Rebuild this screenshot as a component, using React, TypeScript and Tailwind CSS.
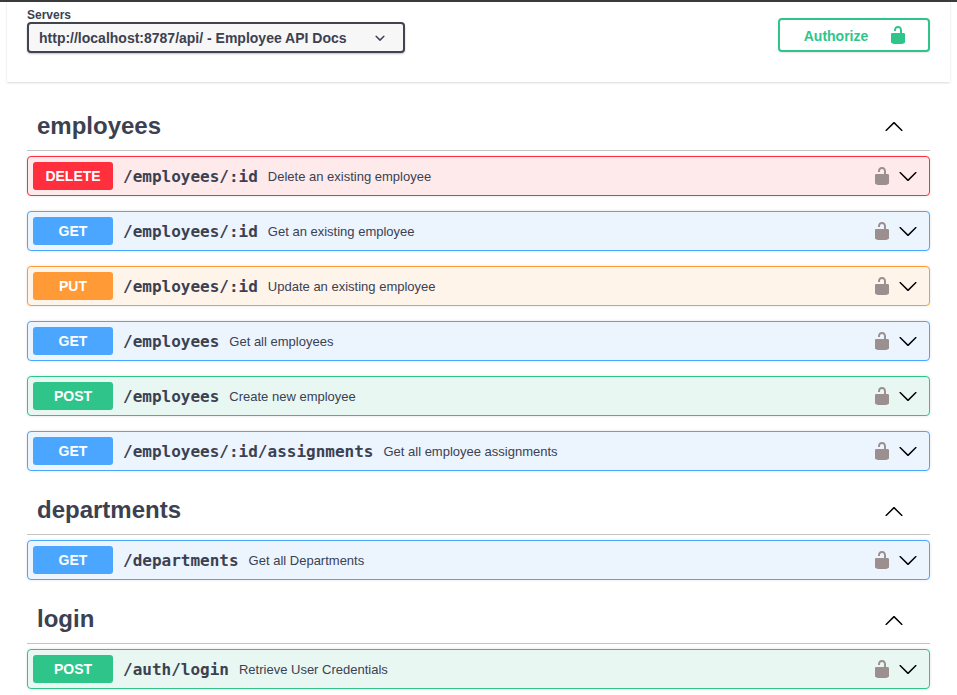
import React from "react";

type Method = "GET" | "POST" | "PUT" | "DELETE";

const methodStyles: Record<Method, { row: string; badge: string }> = {
  GET: { row: "border-[#4ba6ff] bg-[#ecf4fe]", badge: "bg-[#4ba6ff]" },
  POST: { row: "border-[#2fc58a] bg-[#e9f7f2]", badge: "bg-[#2fc58a]" },
  PUT: { row: "border-[#ff9a36] bg-[#fff4ea]", badge: "bg-[#ff9a36]" },
  DELETE: { row: "border-[#ff2f3e] bg-[#feeaea]", badge: "bg-[#ff2f3e]" },
};

const sections: {
  name: string;
  headerClass: string;
  titleClass: string;
  ops: { method: Method; path: string; summary: string }[];
}[] = [
  {
    name: "employees",
    headerClass: "mt-[18px] h-[51px]",
    titleClass: "mt-[2px]",
    ops: [
      { method: "DELETE", path: "/employees/:id", summary: "Delete an existing employee" },
      { method: "GET", path: "/employees/:id", summary: "Get an existing employee" },
      { method: "PUT", path: "/employees/:id", summary: "Update an existing employee" },
      { method: "GET", path: "/employees", summary: "Get all employees" },
      { method: "POST", path: "/employees", summary: "Create new employee" },
      { method: "GET", path: "/employees/:id/assignments", summary: "Get all employee assignments" },
    ],
  },
  {
    name: "departments",
    headerClass: "mt-[14px] h-[49px]",
    titleClass: "mt-0",
    ops: [{ method: "GET", path: "/departments", summary: "Get all Departments" }],
  },
  {
    name: "login",
    headerClass: "mt-[14px] h-[49px]",
    titleClass: "mt-0",
    ops: [{ method: "POST", path: "/auth/login", summary: "Retrieve User Credentials" }],
  },
];

const LockIcon = ({ className }: { className: string }) => (
  <svg viewBox="0 0 20 20" className={className} fill="currentColor">
    <path d="M15.8 8H14V5.6C14 2.703 12.665 1 10 1 7.334 1 6 2.703 6 5.6V6h2v-.801C8 3.754 8.797 3 10 3c1.203 0 2 .754 2 2.199V8H4c-.553 0-1 .646-1 1.199V17c0 .549.428 1.139.951 1.307l1.197.387C5.672 18.861 6.55 19 7.1 19h5.8c.549 0 1.428-.139 1.951-.307l1.196-.387c.524-.167.953-.757.953-1.306V9.199C17 8.646 16.352 8 15.8 8z" />
  </svg>
);

const Chevron = ({ up }: { up?: boolean }) => (
  <svg viewBox="0 0 20 20" className={`h-5 w-5 text-black ${up ? "mt-[4px] rotate-180" : ""}`} fill="currentColor">
    <path d="M17.418 6.109c.272-.268.709-.268.979 0s.271.701 0 .969l-7.908 7.83c-.27.268-.707.268-.979 0l-7.908-7.83c-.27-.268-.27-.701 0-.969.271-.268.709-.268.979 0L10 13.25l7.418-7.141z" />
  </svg>
);

const Operation = ({ method, path, summary }: { method: Method; path: string; summary: string }) => {
  const s = methodStyles[method];
  return (
    <div className={`mb-[15px] flex h-10 items-center rounded border pl-[5px] pr-[11px] shadow-[0_0_3px_rgba(0,0,0,0.12)] ${s.row}`}>
      <div className={`flex h-7 w-20 items-center justify-center rounded-[3px] text-sm font-bold text-white ${s.badge}`}>
        {method}
      </div>
      <span className="ml-[10px] mt-[2px] font-['DejaVu_Sans_Mono',monospace] text-base font-bold text-[#3b4151]">{path}</span>
      <span className="ml-[10px] mt-[1px] text-[13px] text-[#3b4151]">{summary}</span>
      <LockIcon className="ml-auto mr-[-1px] h-5 w-5 text-[#9b8f8f]" />
      <div className="ml-[7px]">
        <Chevron />
      </div>
    </div>
  );
};

export default function App() {
  return (
    <div className="h-[695px] overflow-hidden bg-white font-['Liberation_Sans',Arial,sans-serif] text-[#3b4151]">
      <div className="h-[2px] bg-[#3b3b3b]" />
      <div className="mx-[7px] flex h-20 items-start justify-between bg-white px-5 shadow-[0_1px_2px_rgba(0,0,0,0.15)]">
        <div className="pt-[7px]">
          <div className="text-xs leading-[13px] font-bold">Servers</div>
          <div className="flex h-[31px] w-[378px] items-center justify-between rounded border-2 border-[#41444e] bg-[#f7f7f7] pl-[10px] pr-[13px] shadow-[0_1px_2px_rgba(0,0,0,0.25)]">
            <span className="text-sm font-bold">http://localhost:8787/api/ - Employee API Docs</span>
            <svg viewBox="0 0 20 20" className="h-5 w-5" fill="currentColor">
              <path d="M13.418 7.859a.695.695 0 0 1 .978 0 .68.68 0 0 1 0 .969l-3.908 3.83a.697.697 0 0 1-.979 0l-3.908-3.83a.68.68 0 0 1 0-.969.695.695 0 0 1 .978 0L10 11l3.418-3.141z" />
            </svg>
          </div>
        </div>
        <button className="mt-4 flex h-[34px] w-[152px] items-center justify-center rounded border-2 border-[#2fc58a] bg-white pl-1 text-sm font-bold text-[#2fc58a] shadow-[0_1px_2px_rgba(0,0,0,0.1)]">
          <span className="mt-[2px]">Authorize</span>
          <LockIcon className="ml-5 h-5 w-5" />
        </button>
      </div>
      <div className="px-[27px]">
        {sections.map((section) => (
          <div key={section.name}>
            <div className={`flex items-center justify-between border-b border-[#c4c4c4] pl-[10px] pr-[26px] ${section.headerClass}`}>
              <h3 className={`text-2xl font-bold ${section.titleClass}`}>{section.name}</h3>
              <Chevron up />
            </div>
            <div className="mt-[5px]">
              {section.ops.map((op, i) => (
                <Operation key={i} {...op} />
              ))}
            </div>
          </div>
        ))}
      </div>
    </div>
  );
}
